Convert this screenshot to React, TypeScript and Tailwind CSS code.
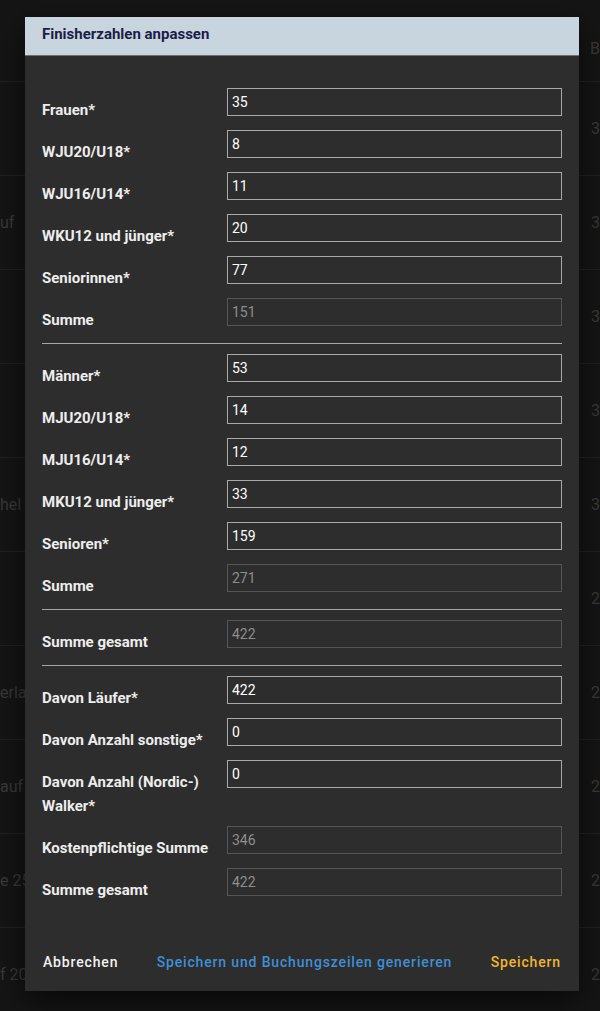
import React from "react";

type Field = { label: string; value: string; disabled?: boolean };

const frauen: Field[] = [
  { label: "Frauen*", value: "35" },
  { label: "WJU20/U18*", value: "8" },
  { label: "WJU16/U14*", value: "11" },
  { label: "WKU12 und jünger*", value: "20" },
  { label: "Seniorinnen*", value: "77" },
  { label: "Summe", value: "151", disabled: true },
];

const maenner: Field[] = [
  { label: "Männer*", value: "53" },
  { label: "MJU20/U18*", value: "14" },
  { label: "MJU16/U14*", value: "12" },
  { label: "MKU12 und jünger*", value: "33" },
  { label: "Senioren*", value: "159" },
  { label: "Summe", value: "271", disabled: true },
];

const gesamt: Field[] = [{ label: "Summe gesamt", value: "422", disabled: true }];

const details: Field[] = [
  { label: "Davon Läufer*", value: "422" },
  { label: "Davon Anzahl sonstige*", value: "0" },
  { label: "Davon Anzahl (Nordic-) Walker*", value: "0" },
  { label: "Kostenpflichtige Summe", value: "346", disabled: true },
  { label: "Summe gesamt", value: "422", disabled: true },
];

const bgRows = [
  { left: "", right: "3" },
  { left: "uf", right: "3" },
  { left: "", right: "3" },
  { left: "", right: "3" },
  { left: "hel V", right: "3" },
  { left: "", right: "2" },
  { left: "erla", right: "2" },
  { left: "auf 2", right: "2" },
  { left: "e 25", right: "2" },
  { left: "f 20", right: "2" },
];

function Row({ field }: { field: Field }) {
  return (
    <div className="flex items-start mb-[8px]">
      <label className="w-[185px] shrink-0 pt-[10px] pr-2 text-[15px] leading-6 font-bold text-[#ededed]">
        {field.label}
      </label>
      <input
        defaultValue={field.value}
        disabled={field.disabled}
        className={
          field.disabled
            ? "flex-1 min-w-0 h-[28px] px-[4px] bg-transparent border-[1.5px] border-[#565656] text-[14px] text-[#8e8e8e] outline-none"
            : "flex-1 min-w-0 h-[28px] px-[4px] bg-transparent border-[1.5px] border-[#a9a9a9] text-[14px] text-white outline-none"
        }
      />
    </div>
  );
}

function Divider() {
  return <div className="h-px shrink-0 bg-[#a6a6a6] mt-[3px] mb-[10px]" />;
}

export default function App() {
  return (
    <div className="relative w-[600px] h-[1011px] overflow-hidden bg-[#151515] font-['Roboto',sans-serif]">
      {/* page behind the dialog */}
      <div className="flex flex-col text-[16px] text-[#3a3a3a]">
        <div className="h-[82px] flex items-end pb-[20px] border-b border-[#222]">
          <div className="w-[592px]" />
          <div>B</div>
        </div>
        {bgRows.map((r, i) => (
          <div key={i} className="h-[94px] flex items-center border-b border-[#222]">
            <div className="w-[592px] whitespace-nowrap overflow-hidden">{r.left}</div>
            <div>{r.right}</div>
          </div>
        ))}
      </div>

      {/* dialog */}
      <div className="absolute left-[25px] top-[17px] w-[554px] bg-[#2d2d2d] shadow-[0_10px_30px_rgba(0,0,0,0.6)]">
        <div className="h-[39px] pt-[7px] px-[17px] bg-[#c8d5df] border-b border-[#6e6e6e]">
          <h2 className="text-[15px] leading-5 font-bold text-[#1b1d48]">Finisherzahlen anpassen</h2>
        </div>

        <div className="flex flex-col px-[17px] pt-[32px]">
          {frauen.map((f) => (
            <Row key={f.label} field={f} />
          ))}
          <Divider />
          {maenner.map((f) => (
            <Row key={f.label} field={f} />
          ))}
          <Divider />
          {gesamt.map((f) => (
            <Row key={f.label} field={f} />
          ))}
          <Divider />
          {details.map((f, i) => (
            <Row key={i} field={f} />
          ))}
        </div>

        <div className="flex justify-between items-center px-[2px] pt-[34px] pb-[11px]">
          <button className="h-9 px-4 text-[14px] font-medium tracking-[0.06em] text-[#f2f2f2]">Abbrechen</button>
          <button className="h-9 px-4 text-[14px] font-medium tracking-[0.06em] text-[#3f8fd6]">
            Speichern und Buchungszeilen generieren
          </button>
          <button className="h-9 px-4 text-[14px] font-medium tracking-[0.06em] text-[#f1b52f]">Speichern</button>
        </div>
      </div>
    </div>
  );
}
